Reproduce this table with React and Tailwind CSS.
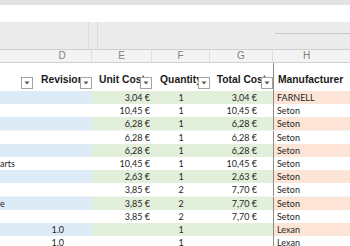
import React from "react";

const rows = [
  { e: "3,04 €", f: "1", g: "3,04 €", h: "FARNELL" },
  { e: "10,45 €", f: "1", g: "10,45 €", h: "Seton" },
  { e: "6,28 €", f: "1", g: "6,28 €", h: "Seton" },
  { e: "6,28 €", f: "1", g: "6,28 €", h: "Seton" },
  { e: "6,28 €", f: "1", g: "6,28 €", h: "Seton" },
  { c: "arts", e: "10,45 €", f: "1", g: "10,45 €", h: "Seton" },
  { e: "2,63 €", f: "1", g: "2,63 €", h: "Seton" },
  { e: "3,85 €", f: "2", g: "7,70 €", h: "Seton" },
  { c: "e", e: "3,85 €", f: "2", g: "7,70 €", h: "Seton" },
  { e: "3,85 €", f: "2", g: "7,70 €", h: "Seton" },
  { d: "1.0", e: "", f: "1", g: "", h: "Lexan" },
  { d: "1.0", e: "", f: "1", g: "", h: "Lexan" },
];

const cols = "grid grid-cols-[33px_59px_60px_58px_63px_1fr]";

function FilterButton() {
  return (
    <span className="absolute right-0 bottom-[2px] z-10 flex h-[12px] w-[12px] items-center justify-center border border-[#a3a3a3] bg-white">
      <svg width="6" height="4" viewBox="0 0 6 4">
        <path d="M0.5 0.5h5L3 3.5z" fill="#5a5a5a" />
      </svg>
    </span>
  );
}

function HeaderCell({ label, filter, left }) {
  return (
    <div className="relative flex h-full items-end overflow-hidden pb-[5px]">
      <span
        className={
          "w-full whitespace-nowrap font-bold " + (left ? "pl-[4px] text-left" : "text-center")
        }
      >
        {label}
      </span>
      {filter && <FilterButton />}
    </div>
  );
}

export default function App() {
  return (
    <div className="h-[246px] w-[350px] overflow-hidden bg-white font-['Liberation_Sans',Arial,sans-serif] text-[#1a1a1a]">
      <div className="h-[5px] bg-[#e3e3e3]" />
      <div className="h-[17px] bg-white" />
      <div className="flex h-[27px] bg-[#ebebeb]">
        <div className="w-[88px]" />
        <div className="h-full w-px bg-[#dadada]" />
        <div className="w-[8px]" />
        <div className="h-full w-px bg-[#dadada]" />
        <div className="flex-1" />
        <div className="mt-[11px] h-px w-[75px] bg-[#c8c8c8]" />
      </div>

      <div className={cols + " h-[14px] border-y border-[#d0d0d0] bg-[#f3f3f3] text-[10px] leading-[12px] text-[#808080]"}>
        <div />
        <div className="border-r border-[#e0e0e0] text-center">D</div>
        <div className="border-r border-[#e0e0e0] text-center">E</div>
        <div className="border-r border-[#e0e0e0] text-center">F</div>
        <div className="border-r border-[#e0e0e0] text-center">G</div>
        <div className="text-center pr-[10px]">H</div>
      </div>

      <div className={cols + " h-[28px] bg-white text-[10.3px] leading-[12px]"}>
        <HeaderCell label="" filter />
        <HeaderCell label="Revision" filter />
        <HeaderCell label="Unit Cost" filter />
        <HeaderCell label="Quantity" filter />
        <HeaderCell label="Total Cost" filter />
        <div className="h-full border-l border-[#8c8c8c]">
          <HeaderCell label="Manufacturer" left />
        </div>
      </div>

      <div className="font-['Lato',Calibri,sans-serif] text-[9px] leading-[13px] text-[#262626]">
        {rows.map((r, i) => {
          const band = i % 2 === 0;
          return (
            <div key={i} className={cols + " h-[13.2px] border-b border-[#f4f4f4]"}>
              <div className={"overflow-visible whitespace-nowrap " + (band ? "bg-[#ddebf7]" : "bg-white")}>
                {r.c}
              </div>
              <div className={"pr-[28px] text-right " + (band ? "bg-[#ddebf7]" : "bg-white")}>{r.d}</div>
              <div className={"pr-[2px] text-right " + (band ? "bg-[#e2efda]" : "bg-white")}>{r.e}</div>
              <div className={"text-center " + (band ? "bg-[#e2efda]" : "bg-white")}>{r.f}</div>
              <div className={"pr-[16px] text-right " + (band ? "bg-[#e2efda]" : "bg-white")}>{r.g}</div>
              <div className={"border-l border-[#8c8c8c] pl-[3px] " + (band ? "bg-[#fce4d6]" : "bg-white")}>{r.h}</div>
            </div>
          );
        })}
      </div>
    </div>
  );
}
